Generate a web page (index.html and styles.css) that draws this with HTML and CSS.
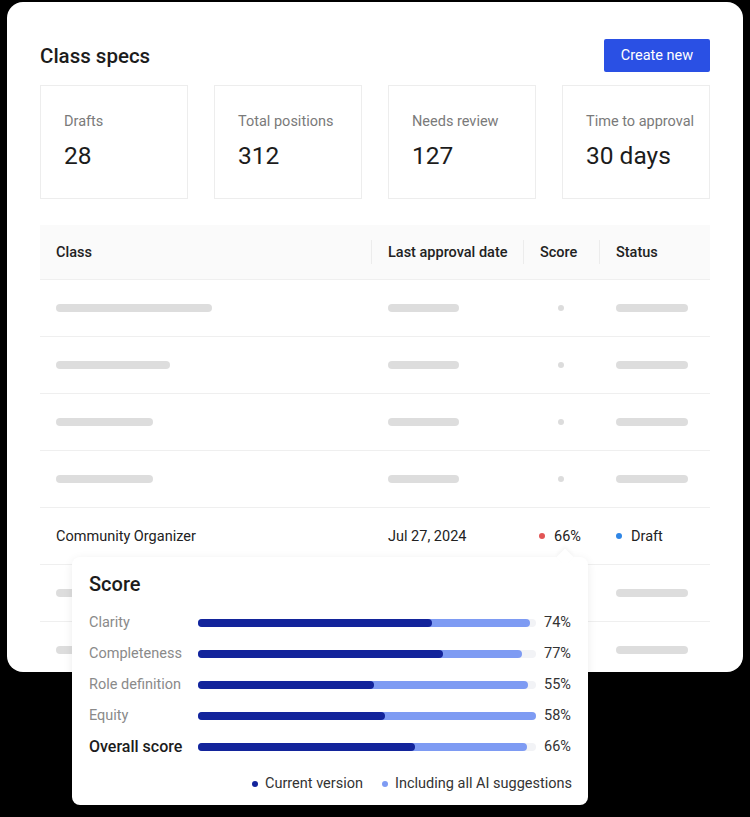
FILE: index.html
```html
<!DOCTYPE html>
<html>
<head>
<meta charset="utf-8">
<link rel="stylesheet" href="styles.css">
</head>
<body>
<div class="card">
  <div class="top">
    <h1 class="title">Class specs</h1>
    <button class="btn">Create new</button>
  </div>
  <div class="stats">
    <div class="stat"><div class="stat-label">Drafts</div><div class="stat-value">28</div></div>
    <div class="stat"><div class="stat-label">Total positions</div><div class="stat-value">312</div></div>
    <div class="stat"><div class="stat-label">Needs review</div><div class="stat-value">127</div></div>
    <div class="stat"><div class="stat-label">Time to approval</div><div class="stat-value">30 days</div></div>
  </div>
  <div class="table">
    <div class="row head">
      <div class="cell">Class</div>
      <div class="cell sep">Last approval date</div>
      <div class="cell sep">Score</div>
      <div class="cell sep">Status</div>
    </div>
    <div class="row">
      <div class="cell"><span class="sk" style="width:156px"></span></div>
      <div class="cell"><span class="sk w71"></span></div>
      <div class="cell center"><span class="skdot"></span></div>
      <div class="cell"><span class="sk w72"></span></div>
    </div>
    <div class="row">
      <div class="cell"><span class="sk" style="width:114px"></span></div>
      <div class="cell"><span class="sk w71"></span></div>
      <div class="cell center"><span class="skdot"></span></div>
      <div class="cell"><span class="sk w72"></span></div>
    </div>
    <div class="row">
      <div class="cell"><span class="sk" style="width:97px"></span></div>
      <div class="cell"><span class="sk w71"></span></div>
      <div class="cell center"><span class="skdot"></span></div>
      <div class="cell"><span class="sk w72"></span></div>
    </div>
    <div class="row">
      <div class="cell"><span class="sk" style="width:97px"></span></div>
      <div class="cell"><span class="sk w71"></span></div>
      <div class="cell center"><span class="skdot"></span></div>
      <div class="cell"><span class="sk w72"></span></div>
    </div>
    <div class="row">
      <div class="cell text">Community Organizer</div>
      <div class="cell text">Jul 27, 2024</div>
      <div class="cell text"><span class="dot red"></span>66%</div>
      <div class="cell text"><span class="dot blue"></span>Draft</div>
    </div>
    <div class="row">
      <div class="cell"><span class="sk" style="width:120px"></span></div>
      <div class="cell"><span class="sk w71"></span></div>
      <div class="cell center"><span class="skdot"></span></div>
      <div class="cell"><span class="sk w72"></span></div>
    </div>
    <div class="row">
      <div class="cell"><span class="sk" style="width:100px"></span></div>
      <div class="cell"><span class="sk w71"></span></div>
      <div class="cell center"><span class="skdot"></span></div>
      <div class="cell"><span class="sk w72"></span></div>
    </div>
  </div>
</div>

<div class="tooltip">
  <div class="caret"></div>
  <div class="tt-title">Score</div>
  <div class="metrics">
    <div class="m-label">Clarity</div>
    <div class="track"><div class="light" style="width:332px"></div><div class="dark" style="width:234px"></div></div>
    <div class="pct">74%</div>

    <div class="m-label">Completeness</div>
    <div class="track"><div class="light" style="width:324px"></div><div class="dark" style="width:245px"></div></div>
    <div class="pct">77%</div>

    <div class="m-label">Role definition</div>
    <div class="track"><div class="light" style="width:330px"></div><div class="dark" style="width:176px"></div></div>
    <div class="pct">55%</div>

    <div class="m-label">Equity</div>
    <div class="track"><div class="light" style="width:338px"></div><div class="dark" style="width:187px"></div></div>
    <div class="pct">58%</div>

    <div class="m-label overall">Overall score</div>
    <div class="track"><div class="light" style="width:329px"></div><div class="dark" style="width:217px"></div></div>
    <div class="pct">66%</div>
  </div>
  <div class="legend">
    <span class="lg"><span class="ldot dk"></span>Current version</span>
    <span class="lg"><span class="ldot lt"></span>Including all AI suggestions</span>
  </div>
</div>
</body>
</html>
```

FILE: styles.css
```css
* { box-sizing: border-box; }
html, body { margin: 0; padding: 0; }
body {
  background: #000;
  font-family: Roboto, "Liberation Sans", sans-serif;
  color: #1f1f1f;
  width: 750px;
  height: 817px;
  overflow: hidden;
  position: relative;
}
.card {
  margin: 2px 0 0 7px;
  width: 736px;
  height: 670px;
  background: #fff;
  border-radius: 16px;
  padding: 37px 33px 0 33px;
  overflow: hidden;
}
.top {
  display: flex;
  justify-content: space-between;
  align-items: center;
  height: 34px;
}
.title {
  margin: 0;
  font-size: 20.5px;
  font-weight: 500;
  color: #1c1c1c;
}
.btn {
  border: none;
  background: #2a50e4;
  color: #fff;
  font-family: inherit;
  font-size: 14.5px;
  height: 33px;
  width: 106px;
  border-radius: 2px;
  padding: 0;
  margin-top: -1px;
}
.stats {
  margin-top: 12px;
  display: grid;
  grid-template-columns: repeat(4, 148px);
  column-gap: 26px;
}
.stat {
  height: 114px;
  border: 1px solid #ededed;
  padding: 27px 0 0 23px;
}
.stat-label {
  font-size: 14.5px;
  line-height: 18px;
  color: #7a7a7a;
}
.stat-value {
  margin-top: 10px;
  font-size: 24.5px;
  line-height: 30px;
  color: #1c1c1c;
}
.table {
  margin-top: 26px;
}
.row {
  display: grid;
  grid-template-columns: 331px 152px 76px 111px;
  height: 57px;
  border-bottom: 1px solid #efefef;
}
.row.head {
  height: 55px;
  background: #fafafa;
}
.cell {
  display: flex;
  align-items: center;
  padding-left: 16px;
  font-size: 14.5px;
  position: relative;
}
.head .cell {
  font-weight: 500;
  color: #222;
}
.head .cell.sep { padding-left: 17px; }
.head .cell.sep::before {
  content: "";
  position: absolute;
  left: 0;
  top: 15px;
  height: 24px;
  width: 1px;
  background: #ececec;
}
.cell.center { justify-content: center; padding-left: 0; }
.row .cell:nth-child(n+2) { padding-left: 17px; }
.row .cell.center { padding-left: 0; }
.cell.text { color: #222; }
.sk {
  display: block;
  height: 8px;
  border-radius: 4px;
  background: #dddddd;
}
.w71 { width: 71px; }
.w72 { width: 72px; }
.skdot {
  display: block;
  width: 6px;
  height: 6px;
  border-radius: 50%;
  background: #dcdcdc;
}
.dot {
  display: inline-block;
  width: 6px;
  height: 6px;
  border-radius: 50%;
  margin: 0 9px 0 0;
}
.dot.red { background: #e25555; }
.dot.blue { background: #2f86e6; }
.row .cell:nth-child(3).text { padding-left: 16px; }
.row .cell:nth-child(4).text { padding-left: 17px; }

.tooltip {
  position: absolute;
  left: 72px;
  top: 557px;
  width: 516px;
  height: 248px;
  background: #fff;
  border-radius: 8px;
  box-shadow: 0 2px 10px rgba(0,0,0,0.08);
  padding: 15px 16px 0 17px;
}
.caret {
  position: absolute;
  top: -6px;
  left: 487px;
  width: 12px;
  height: 12px;
  background: #fff;
  transform: rotate(45deg);
  box-shadow: -2px -2px 4px rgba(0,0,0,0.04);
}
.tt-title {
  position: relative;
  font-size: 20px;
  font-weight: 500;
  line-height: 24px;
  color: #1c1c1c;
}
.metrics {
  margin-top: 11px;
  display: grid;
  grid-template-columns: 109px 338px auto;
  grid-auto-rows: 31px;
  align-items: center;
}
.m-label {
  font-size: 14.5px;
  color: #8a8a8a;
}
.m-label.overall {
  font-size: 16px;
  font-weight: 500;
  color: #1c1c1c;
}
.track {
  position: relative;
  height: 8px;
  border-radius: 4px;
  background: #f2f3f6;
}
.light, .dark {
  position: absolute;
  left: 0;
  top: 0;
  height: 8px;
  border-radius: 4px;
}
.light { background: #7e9bf3; }
.dark { background: #13249b; }
.pct {
  padding-left: 8px;
  font-size: 14.5px;
  color: #333;
}
.legend {
  margin-top: 13px;
  display: flex;
  justify-content: flex-end;
  gap: 19px;
  font-size: 14.5px;
  color: #333;
}
.lg { display: flex; align-items: center; }
.ldot {
  display: inline-block;
  width: 6px;
  height: 6px;
  border-radius: 50%;
  margin-right: 7px;
}
.ldot.dk { background: #13249b; }
.ldot.lt { background: #7e9bf3; }
```
